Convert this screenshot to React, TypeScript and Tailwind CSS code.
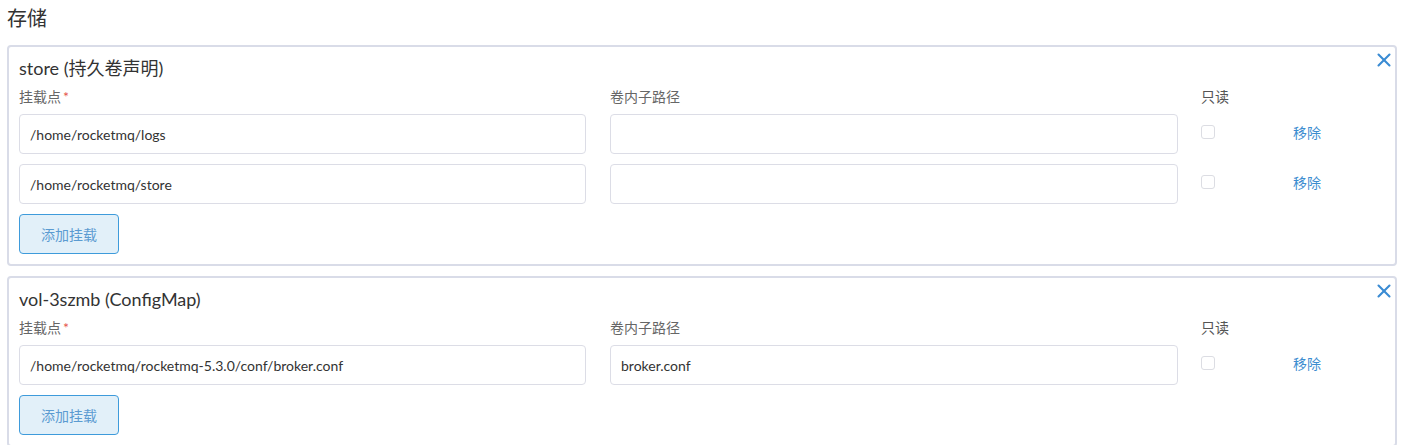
import { X } from 'lucide-react';

type Mount = { path: string; subPath: string };

type Volume = { name: string; mounts: Mount[] };

const volumes: Volume[] = [
  {
    name: 'store (持久卷声明)',
    mounts: [
      { path: '/home/rocketmq/logs', subPath: '' },
      { path: '/home/rocketmq/store', subPath: '' },
    ],
  },
  {
    name: 'vol-3szmb (ConfigMap)',
    mounts: [
      {
        path: '/home/rocketmq/rocketmq-5.3.0/conf/broker.conf',
        subPath: 'broker.conf',
      },
    ],
  },
];

const font = { fontFamily: 'Lato, "Noto Sans CJK SC", sans-serif' };

const VolumeCard = ({ volume }: { volume: Volume }) => (
  <div className="relative border-2 border-[#d9dce8] rounded-[4px] bg-white px-[10px] pt-[9px] pb-[10px]">
    <button className="absolute right-0 top-[2px] text-[#3a8bd3]">
      <X className="size-[22px]" strokeWidth={2.3} />
    </button>

    <h3 className="text-[18px] leading-[24px] text-[#333]">{volume.name}</h3>

    <div className="mt-[6px] grid grid-cols-[567px_567px_1fr] gap-x-[24px] gap-y-[10px] items-center">
      <div className="text-[14px] leading-[21px] text-[#666] -mb-[3px]">
        挂载点<span className="text-[#e5534b] ml-[2px]">*</span>
      </div>
      <div className="text-[14px] leading-[21px] text-[#666] -mb-[3px]">
        卷内子路径
      </div>
      <div className="text-[14px] leading-[21px] text-[#555] -mb-[3px]">
        只读
      </div>

      {volume.mounts.map((m) => (
        <>
          <input
            key={m.path}
            readOnly
            value={m.path}
            className="h-[40px] border border-[#dcdde6] rounded-[4px] px-[10px] text-[14px] text-[#333] outline-none"
            style={font}
          />
          <input
            readOnly
            value={m.subPath}
            className="h-[40px] border border-[#dcdde6] rounded-[4px] px-[10px] text-[14px] text-[#333] outline-none w-[568px]"
            style={font}
          />
          <div className="flex items-center -mt-[4px]">
            <span className="size-[14px] border border-[#dcdde3] rounded-[3px] bg-white" />
            <a className="ml-[78px] text-[14px] text-[#3c8dd0] cursor-pointer">
              移除
            </a>
          </div>
        </>
      ))}
    </div>

    <button
      className="mt-[10px] w-[100px] h-[40px] border border-[#3e9bdb] bg-[#e2f0f9] rounded-[4px] text-[14px] text-[#5b9bd1]"
      style={font}
    >
      添加挂载
    </button>
  </div>
);

export default function App() {
  return (
    <div className="bg-white min-h-screen pl-[7px] pr-[16px] pt-[4px]" style={font}>
      <h2 className="text-[20px] leading-[28px] text-[#333]">存储</h2>

      <div className="mt-[13px] space-y-[10px]">
        {volumes.map((v) => (
          <VolumeCard key={v.name} volume={v} />
        ))}
      </div>
    </div>
  );
}
